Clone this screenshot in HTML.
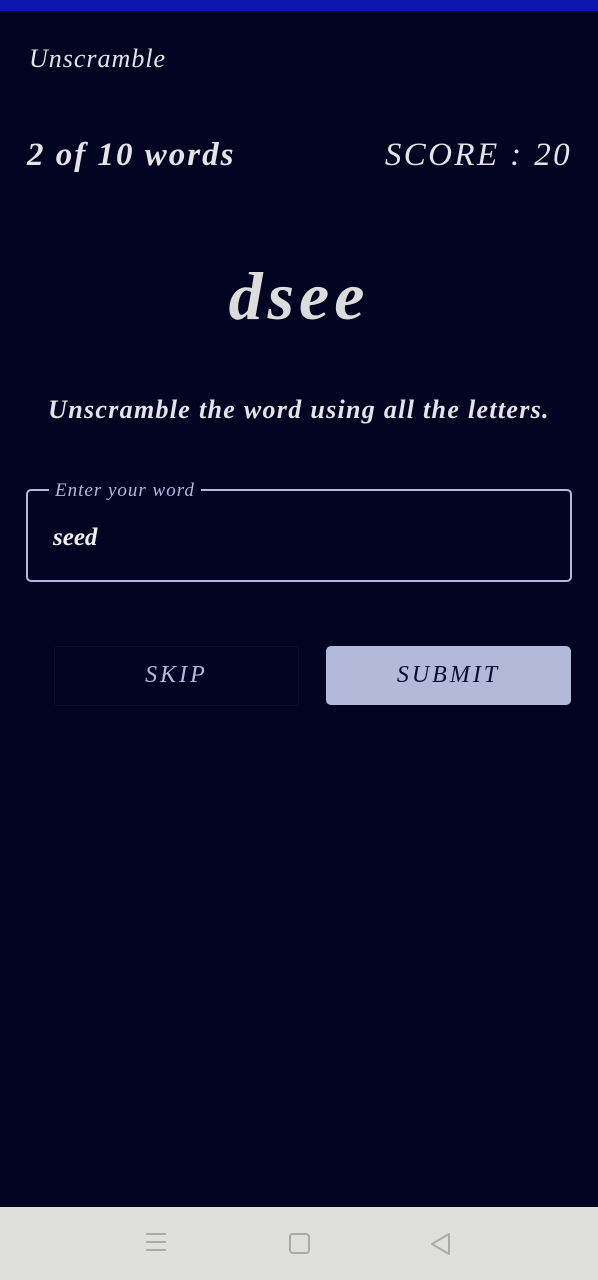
<!DOCTYPE html>
<html><head><meta charset="utf-8"><style>
html,body{margin:0;padding:0;width:598px;height:1280px;overflow:hidden;background:#030422;font-family:"Liberation Serif",serif;font-style:italic;color:#e4e4e8}
.top{position:absolute;top:0;left:0;width:598px;height:11px;background:#0a16ad}
.t{position:absolute;white-space:nowrap}
.nav{position:absolute;top:1207px;left:0;width:598px;height:73px;background:#dfe0dd}
</style></head><body>
<div class="top"></div>
<div class="t" style="left:29px;top:44px;font-size:26px;letter-spacing:1px">Unscramble</div>
<div class="t" style="left:27px;top:137px;font-size:33px;font-weight:bold;letter-spacing:2px">2 of 10 words</div>
<div class="t" style="right:26px;top:137px;font-size:33px;letter-spacing:2.4px">SCORE : 20</div>
<div class="t" style="left:0;width:598px;text-align:center;top:257px;font-size:68px;font-weight:bold;color:#dcdcdc;letter-spacing:5px">dsee</div>
<div class="t" style="left:0;width:598px;text-align:center;top:395px;font-size:26px;font-weight:bold;letter-spacing:1.3px">Unscramble the word using all the letters.</div>
<div style="position:absolute;left:26px;top:489px;width:542px;height:89px;border:2px solid #b3b9d8;border-radius:5px"></div>
<div class="t" style="left:49px;top:480px;padding:0 6px;background:#030422;font-size:19px;color:#b3b9d8;letter-spacing:1px">Enter your word</div>
<div class="t" style="left:53px;top:524px;font-size:25px;font-weight:bold;color:#f0f0f0">seed</div>
<div style="position:absolute;left:54px;top:646px;width:243px;height:58px;border:1px solid #0c0e2e;border-radius:4px"></div>
<div class="t" style="left:54px;width:245px;text-align:center;top:662px;font-size:24px;color:#b3b9d8;letter-spacing:3px">SKIP</div>
<div style="position:absolute;left:326px;top:646px;width:245px;height:59px;background:#b3b9d8;border-radius:5px"></div>
<div class="t" style="left:326px;width:245px;text-align:center;top:662px;font-size:24px;color:#0b0d33;letter-spacing:3px">SUBMIT</div>
<div class="nav">
<div style="position:absolute;left:146px;top:26px;width:20px;height:2px;background:#aaa;box-shadow:0 8px 0 #aaa,0 16px 0 #aaa"></div>
<div style="position:absolute;left:289px;top:26px;width:17px;height:17px;border:2px solid #aaa;border-radius:4px"></div>
<svg style="position:absolute;left:429px;top:25px" width="24" height="24"><path d="M20 2 L3 12 L20 22 Z" fill="none" stroke="#aaa" stroke-width="2" stroke-linejoin="round"/></svg>
</div>
</body></html>
